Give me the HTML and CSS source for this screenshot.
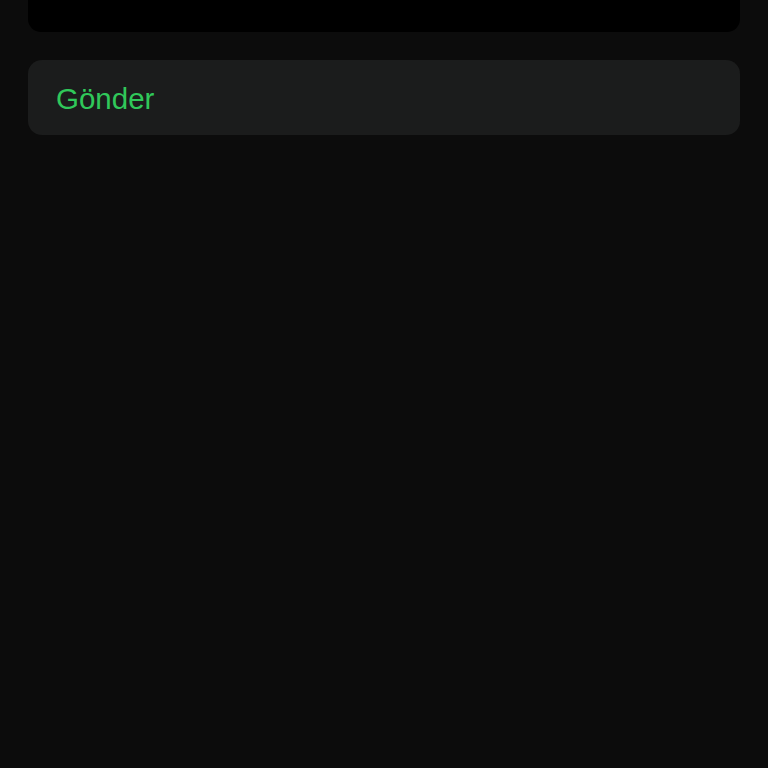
FILE: index.html
```html
<!DOCTYPE html>
<html lang="tr">
<head>
<meta charset="utf-8">
<link rel="stylesheet" href="styles.css">
</head>
<body>
<div class="page">
  <div class="panel-top"></div>
  <div class="action-row">
    <span class="action-label">Gönder</span>
  </div>
</div>
</body>
</html>
```
FILE: styles.css
```css
html, body {
  margin: 0;
  padding: 0;
  background: #0c0c0c;
  height: 100%;
}
.page {
  display: flex;
  flex-direction: column;
  gap: 28px;
  padding: 0 28px;
  font-family: "Liberation Sans", Arial, sans-serif;
}
.panel-top {
  height: 32px;
  background: #000000;
  border-radius: 0 0 13px 13px;
}
.action-row {
  box-sizing: border-box;
  height: 75px;
  padding: 2px 0 0 28px;
  background: #1b1c1c;
  border-radius: 14px;
  display: flex;
  align-items: center;
}
.action-label {
  color: #30c85a;
  font-size: 29.5px;
  line-height: 1;
}
```
